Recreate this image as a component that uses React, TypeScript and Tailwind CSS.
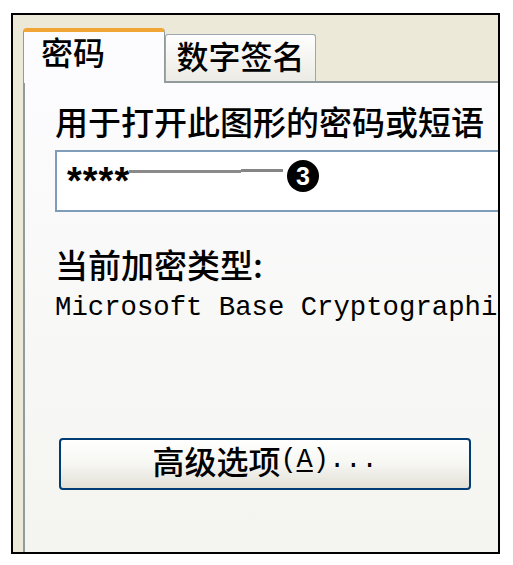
import { useState } from 'react';

const cjk = "font-['Noto_Sans_CJK_SC',sans-serif]";
const mono = "font-['Liberation_Mono','Noto_Sans_CJK_SC',monospace]";

export default function App() {
  const [tab, setTab] = useState(0);

  return (
    <div className="min-h-[565px] bg-white pl-[11px] pt-[13px]">
      <div className="flex h-[541px] w-[489px] flex-col overflow-hidden border-2 border-black bg-[#ECE9D8] pl-[10px]">
        {/* Tabs */}
        <div className="flex h-[66px] shrink-0 items-end">
          <button
            onClick={() => setTab(0)}
            className={`relative z-10 -mb-[2px] flex h-[55px] w-[142px] items-start rounded-t-[4px] border-x border-t-[4px] border-x-[#919B9C] border-t-[#F0A535] bg-[#FCFCFE] pl-[17px] pt-[3px] text-[32px] font-medium leading-[32px] text-black ${cjk}`}
          >
            密码
          </button>
          <button
            onClick={() => setTab(1)}
            className={`flex h-[47px] w-[151px] items-start justify-center rounded-t-[3px] border-x border-t border-[#9CA6B0] bg-gradient-to-b from-[#FEFEFE] to-[#ECEBE5] pt-[4px] text-[32px] font-medium leading-[32px] text-black ${cjk}`}
          >
            数字签名
          </button>
        </div>

        {/* Panel */}
        <div className="flex flex-1 flex-col border-l-2 border-t-2 border-[#919B9C] bg-gradient-to-b from-[#FCFCFE] to-[#F4F4F0] pl-[30px]">
          {tab === 0 && (
            <>
              <div className={`mt-[22px] whitespace-nowrap text-[33px] font-medium leading-[33px] text-black ${cjk}`}>
                用于打开此图形的密码或短语
              </div>

              <div className="relative mt-[12px] h-[62px] w-[520px] border-2 border-[#7F9DB9] bg-white pl-[6px] pt-[14px]">
                <span className={`text-[38px] font-bold leading-[38px] tracking-[-7px] text-black ${mono}`}>****</span>
                {/* annotation callout */}
                <div className="absolute left-[72px] top-[18px] h-[3px] w-[112px] bg-[#8A8A8A]" />
                <div className="absolute left-[184px] top-[17px] h-[3px] w-[42px] bg-[#858585]" />
                <div className="absolute left-[230px] top-[8px] flex h-[32px] w-[32px] items-center justify-center rounded-full bg-black text-[25px] font-bold leading-none text-white font-['Liberation_Sans',sans-serif]">
                  3
                </div>
              </div>

              <div className={`mt-[36px] whitespace-nowrap text-[33px] font-medium leading-[33px] text-black ${cjk}`}>
                当前加密类型:
              </div>
              <div className={`mt-[13px] whitespace-nowrap text-[27.3px] leading-[27px] text-black ${mono}`}>
                Microsoft Base Cryptographi
              </div>

              <button className="ml-[4px] mt-[117px] flex h-[52px] w-[412px] items-center justify-center rounded-[4px] border-2 border-[#003C74] bg-gradient-to-b from-white via-[#F6F6F3] to-[#E2E0D6] pb-[8px] text-black">
                <span className={`text-[32px] font-medium leading-[32px] ${cjk}`}>高级选项</span>
                <span className={`text-[27px] leading-[27px] ${mono}`}>
                  (<span className="underline underline-offset-[3px]">A</span>)...
                </span>
              </button>
            </>
          )}
        </div>
      </div>
    </div>
  );
}
